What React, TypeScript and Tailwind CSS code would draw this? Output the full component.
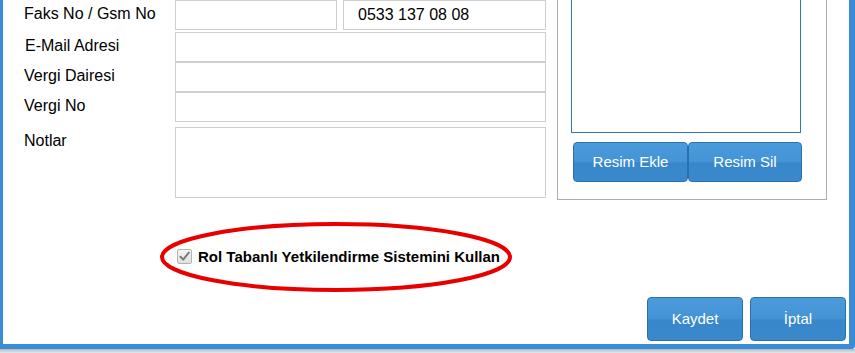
import React from "react";

const inputCls = "h-[30px] border border-[#cfcfcf] bg-white";

function BlueBtn({ label, className }: { label: string; className: string }) {
  return (
    <button
      className={
        "flex items-center justify-center rounded-[4px] border border-[#2a70ae] bg-[linear-gradient(to_bottom,#4b9bdb_0%,#4493d5_50%,#3887cb_52%,#3a89cc_100%)] text-white text-[15px] font-['Liberation_Sans',Arial,sans-serif] " +
        className
      }
    >
      {label}
    </button>
  );
}

export default function App() {
  return (
    <div className="relative w-[855px] h-[353px] overflow-hidden bg-white font-['Liberation_Sans',Arial,sans-serif] text-[16px] text-black">
      <div className="h-[349px] border-l-[3px] border-r-[6px] border-b-[5px] border-[#3a8dd4] rounded-br-[4px] flex flex-col">
        {/* top section */}
        <div className="flex">
          <div className="pl-[21px] flex flex-col">
            <div className="flex items-center">
              <div className="w-[151px] -mt-[3px]">Faks No / Gsm No</div>
              <div className={inputCls + " w-[162px]"} />
              <div className={inputCls + " w-[203px] ml-[6px] flex items-center pl-[14px]"}>0533 137 08 08</div>
            </div>
            <div className="flex items-center mt-[2px]">
              <div className="w-[151px] pl-[1px] -mt-[3px]">E-Mail Adresi</div>
              <div className={inputCls + " w-[371px]"} />
            </div>
            <div className="flex items-center">
              <div className="w-[151px] -mt-[3px]">Vergi Dairesi</div>
              <div className={inputCls + " w-[371px]"} />
            </div>
            <div className="flex items-center">
              <div className="w-[151px] -mt-[3px]">Vergi No</div>
              <div className={inputCls + " w-[371px]"} />
            </div>
            <div className="flex items-start mt-[5px]">
              <div className="w-[151px] pt-[2px]">Notlar</div>
              <div className="w-[371px] h-[71px] border border-[#cfcfcf] bg-white" />
            </div>
          </div>
          <div className="ml-[11px] w-[270px] h-[200px] border-x border-b border-[#ababab] flex flex-col">
            <div className="ml-[13px] w-[230px] h-[133px] border-x border-b border-[#2f78b8]" />
            <div className="flex ml-[15px] mt-[9px]">
              <BlueBtn label="Resim Ekle" className="w-[115px] h-[40px]" />
              <BlueBtn label="Resim Sil" className="w-[114px] h-[40px]" />
            </div>
          </div>
        </div>

        {/* checkbox row */}
        <div className="flex items-center mt-[49px] pl-[174px] h-[15px]">
          <div className="w-[15px] h-[15px] border border-[#b4b4b4] rounded-[2px] bg-[linear-gradient(to_bottom,#f4f4f4,#e2e2e2)] flex items-center justify-center">
            <svg width="13" height="13" viewBox="0 0 13 13">
              <path d="M2.5 6.8 L5.2 9.6 L10.8 2.6" fill="none" stroke="#7a7a7a" strokeWidth="2" strokeLinecap="round" strokeLinejoin="round" />
            </svg>
          </div>
          <span className="ml-[6px] font-bold text-[15px] leading-none">Rol Tabanlı Yetkilendirme Sistemini Kullan</span>
        </div>

        {/* bottom buttons */}
        <div className="mt-auto flex justify-end gap-[7px] pr-[3px] pb-[3px]">
          <BlueBtn label="Kaydet" className="w-[96px] h-[44px]" />
          <BlueBtn label="İptal" className="w-[96px] h-[44px]" />
        </div>
      </div>
      <div className="h-[4px] bg-[linear-gradient(to_bottom,#aeb8c2,#e4e8ec)]" />

      {/* red annotation ellipse */}
      <svg className="absolute left-0 top-0 pointer-events-none" width="855" height="353">
        <ellipse cx="336" cy="257" rx="174" ry="33" fill="none" stroke="#e80000" strokeWidth="4" />
      </svg>
    </div>
  );
}
